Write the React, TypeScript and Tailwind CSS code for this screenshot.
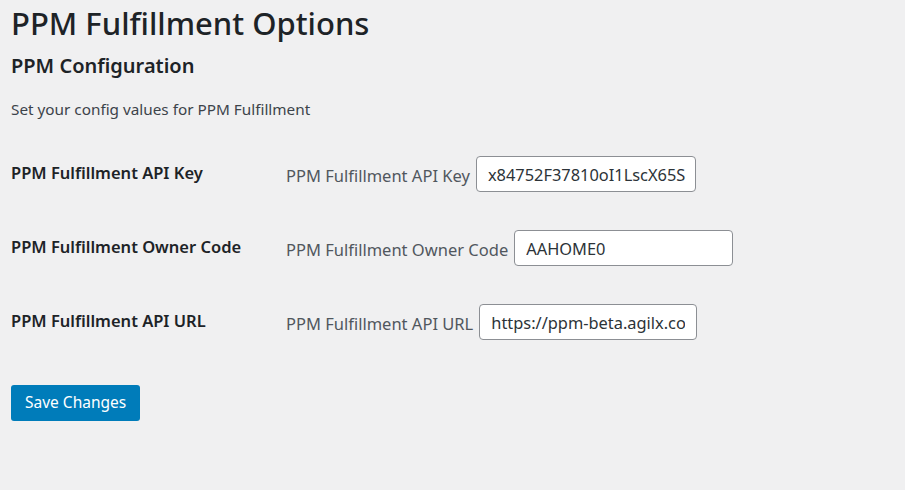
const fields = [
  { label: "PPM Fulfillment API Key", value: "x84752F37810oI1LscX65S", cls: "w-[220px] pr-[3px]" },
  { label: "PPM Fulfillment Owner Code", value: "AAHOME0", cls: "w-[219px] pr-[3px]" },
  { label: "PPM Fulfillment API URL", value: "https://ppm-beta.agilx.com", cls: "w-[218px] pr-[11px]" },
];

export default function App() {
  return (
    <div className="min-h-[490px] w-full bg-[#f0f0f1] px-[11px] font-['Noto_Sans',sans-serif] text-[#3c434a]">
      <h1 className="pt-[3px] text-[31px] leading-[40px] font-medium text-[#1d2327]">
        PPM Fulfillment Options
      </h1>
      <h2 className="mt-[9px] text-[20px] leading-[28px] font-semibold text-[#1d2327]">
        PPM Configuration
      </h2>
      <p className="mt-[19px] text-[15.3px] leading-[20px]">Set your config values for PPM Fulfillment</p>

      <div className="mt-[18px] flex flex-col">
        {fields.map((f) => (
          <div key={f.label} className="flex h-[74px] items-center">
            <div className="w-[275px] -mt-[2px] text-[16.5px] font-semibold text-[#1d2327]">{f.label}</div>
            <label className="flex items-center gap-[6px] text-[16.5px] text-[#50575e]">
              <span className="mt-[4px]">{f.label}</span>
              <input
                type="text"
                defaultValue={f.value}
                className={`${f.cls} h-[36px] rounded-[4px] border border-[#8c8f94] bg-white pl-[11px] text-[16.4px] text-[#2c3338] outline-none`}
              />
            </label>
          </div>
        ))}
      </div>

      <button className="mt-[26px] h-[36px] rounded-[3px] bg-[#007cba] px-[14px] text-[15.5px] text-white">
        Save Changes
      </button>
    </div>
  );
}
